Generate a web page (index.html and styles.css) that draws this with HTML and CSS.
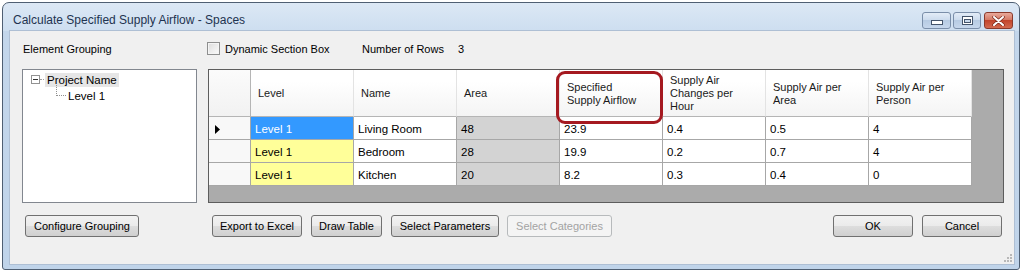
FILE: index.html
```html
<!DOCTYPE html>
<html lang="en">
<head>
  <meta charset="UTF-8" />
  <title>Calculate Specified Supply Airflow - Spaces</title>
  <link rel="stylesheet" href="styles.css">
</head>
<body>
  <div class="window">
    <!-- TITLE BAR -->
    <div class="titlebar">
      <span class="title">Calculate Specified Supply Airflow - Spaces</span>
      <div class="caption-btns">
        <div class="cap cap-min">
          <svg width="12" height="5" viewBox="0 0 12 5"><rect x="0.5" y="0.5" width="11" height="4" fill="#fff" stroke="#44546b"/></svg>
        </div>
        <div class="cap cap-max">
          <svg width="11" height="9" viewBox="0 0 11 9"><rect x="0.5" y="0.5" width="10" height="8" fill="#fff" stroke="#44546b"/><rect x="2.5" y="3.5" width="6" height="3" fill="#c9d9ec" stroke="#44546b"/></svg>
        </div>
        <div class="cap cap-close">
          <svg width="13" height="10" viewBox="0 0 13 10"><path d="M2 1 L11 9 M11 1 L2 9" stroke="#7a2a1c" stroke-width="3.4" stroke-linecap="round"/><path d="M2 1 L11 9 M11 1 L2 9" stroke="#fff" stroke-width="2" stroke-linecap="round"/></svg>
        </div>
      </div>
    </div>

    <!-- DIALOG BODY -->
    <div class="content">
      <div class="col-left">
        <div class="top-row"><span class="label">Element Grouping</span></div>
        <div class="tree">
          <div class="node root">
            <span class="expander"><svg width="9" height="9" viewBox="0 0 9 9"><rect x="0.5" y="0.5" width="8" height="8" fill="#fff" stroke="#929292"/><path d="M2 4.5 H7" stroke="#333"/></svg></span>
            <span class="stub"></span>
            <span class="node-text selected">Project Name</span>
          </div>
          <div class="node child">
            <span class="elbow"></span>
            <span class="node-text">Level 1</span>
          </div>
        </div>
        <div class="btn-row">
          <button class="btn btn-config">Configure Grouping</button>
        </div>
      </div>

      <div class="col-right">
        <div class="top-row">
          <span class="checkbox"></span>
          <span class="check-label">Dynamic Section Box</span>
          <span class="rows-label">Number of Rows</span>
          <span class="rows-value">3</span>
        </div>

        <div class="grid-wrap">
          <div class="table">
            <div class="cell hdr corner"></div>
            <div class="cell hdr">Level</div>
            <div class="cell hdr">Name</div>
            <div class="cell hdr">Area</div>
            <div class="cell hdr">Specified<br>Supply Airflow</div>
            <div class="cell hdr">Supply Air<br>Changes per<br>Hour</div>
            <div class="cell hdr">Supply Air per<br>Area</div>
            <div class="cell hdr">Supply Air per<br>Person</div>

            <div class="cell rowhdr"><svg width="5" height="9" viewBox="0 0 5 9"><path d="M0 0 L5 4.5 L0 9 Z" fill="#000"/></svg></div>
            <div class="cell current">Level 1</div>
            <div class="cell">Living Room</div>
            <div class="cell area">48</div>
            <div class="cell">23.9</div>
            <div class="cell">0.4</div>
            <div class="cell">0.5</div>
            <div class="cell">4</div>

            <div class="cell rowhdr"></div>
            <div class="cell flagged">Level 1</div>
            <div class="cell">Bedroom</div>
            <div class="cell area">28</div>
            <div class="cell">19.9</div>
            <div class="cell">0.2</div>
            <div class="cell">0.7</div>
            <div class="cell">4</div>

            <div class="cell rowhdr"></div>
            <div class="cell flagged">Level 1</div>
            <div class="cell">Kitchen</div>
            <div class="cell area">20</div>
            <div class="cell">8.2</div>
            <div class="cell">0.3</div>
            <div class="cell">0.4</div>
            <div class="cell">0</div>
          </div>
          <!-- callout round the Specified Supply Airflow column -->
          <div class="callout"></div>
        </div>

        <div class="btn-row actions">
          <button class="btn btn-export">Export to Excel</button>
          <button class="btn btn-draw">Draw Table</button>
          <button class="btn btn-params">Select Parameters</button>
          <button class="btn btn-cats" disabled>Select Categories</button>
          <span class="spacer"></span>
          <button class="btn btn-ok">OK</button>
          <button class="btn btn-cancel">Cancel</button>
        </div>
      </div>

      <svg class="grip" width="9" height="9" viewBox="0 0 9 9">
        <rect x="7" y="1" width="2" height="2" fill="#b8b8b8"/>
        <rect x="4" y="4" width="2" height="2" fill="#b8b8b8"/>
        <rect x="7" y="4" width="2" height="2" fill="#b8b8b8"/>
        <rect x="1" y="7" width="2" height="2" fill="#b8b8b8"/>
        <rect x="4" y="7" width="2" height="2" fill="#b8b8b8"/>
        <rect x="7" y="7" width="2" height="2" fill="#b8b8b8"/>
      </svg>
    </div>
  </div>
</body>
</html>
```

FILE: styles.css
```css
body {
  margin: 0;
  background-color: #fff;
  font-family: 'Liberation Sans', Arial, sans-serif;
  font-size: 11px;
  color: #000;
}

/* Window frame */
.window {
  margin: 2px 0 0 2px;
  width: 1018px;
  height: 268px;
  box-sizing: border-box;
  border: 1px solid #4f5f73;
  border-radius: 7px 7px 3px 3px;
  padding: 0 5px 5px 7px;
  display: flex;
  flex-direction: column;
  background: linear-gradient(#dce8f5, #cddef0 28px, #c3d6eb 28px, #c0d4ea);
}
.titlebar {
  height: 28px;
  display: flex;
  align-items: flex-start;
  padding: 0 1px 0 3px;
}
.title {
  margin-top: 10px;
  font-size: 12px;
  color: #1e3350;
}
.caption-btns {
  margin-left: auto;
  margin-top: 9px;
  display: flex;
}
.cap {
  height: 17px;
  box-sizing: border-box;
  border: 1px solid #7a8ea9;
  border-radius: 3px;
  display: flex;
  align-items: center;
  justify-content: center;
  background: linear-gradient(#e3ecf7, #cddcee 45%, #b7cbe3 50%, #c6d7ec);
}
.cap-min {
  width: 29px;
  margin-right: 2px;
  padding-top: 4px;
}
.cap-max {
  width: 28px;
  margin-right: 3px;
}
.cap-close {
  width: 29px;
  border-color: #8a3a2c;
  background: linear-gradient(#e9a99a, #d57a66 45%, #c2452c 50%, #d36a50);
}

/* Dialog body */
.content {
  position: relative;
  height: 233px;
  box-sizing: border-box;
  background-color: #f0f0f0;
  box-shadow: 0 0 0 1px #aebfd4;
  padding: 11px 10px 0 12px;
  display: flex;
  gap: 11px;
}
.col-left {
  width: 175px;
  display: flex;
  flex-direction: column;
}
.col-right {
  width: 796px;
  display: flex;
  flex-direction: column;
}
.top-row {
  height: 13px;
  display: flex;
  align-items: center;
}
.label {
  padding-left: 1px;
}
.checkbox {
  width: 13px;
  height: 13px;
  box-sizing: border-box;
  margin-left: -1px;
  border: 1px solid #8e8f8f;
  background: linear-gradient(135deg, #dcdcdc, #fbfbfb);
  box-shadow: inset 0 0 0 1px #f4f4f4;
}
.check-label {
  margin-left: 5px;
  width: 137px;
}
.rows-label {
  width: 96px;
}

/* Tree */
.tree {
  margin-top: 14px;
  height: 134px;
  box-sizing: border-box;
  border: 1px solid #82878f;
  background-color: #fff;
  padding-top: 1px;
}
.node {
  height: 17px;
  display: flex;
  align-items: center;
}
.root {
  padding-left: 8px;
}
.expander {
  display: flex;
}
.stub {
  width: 4px;
  border-top: 1px dotted #a0a0a0;
  margin: 0 1px 0 0;
}
.node-text {
  padding: 1px 2px;
  font-size: 11.5px;
}
.node-text.selected {
  background-color: #e6e6e6;
}
.child {
  padding-left: 33px;
  align-items: flex-start;
}
.child .elbow {
  width: 9px;
  height: 10px;
  margin-top: -3px;
  border-left: 1px dotted #909090;
  border-bottom: 1px dotted #909090;
}
.child .node-text {
  margin-top: 1px;
}

/* Data grid */
.grid-wrap {
  position: relative;
  margin-top: 14px;
  height: 134px;
  box-sizing: border-box;
  border: 1px solid #5d5d5d;
  background-color: #ababab;
}
.table {
  display: grid;
  grid-template-columns: 42px repeat(7, 103px);
  grid-template-rows: 47px repeat(3, 23px);
  width: 763px;
}
.cell {
  box-sizing: border-box;
  border-right: 1px solid #a7a7a7;
  border-bottom: 1px solid #a7a7a7;
  background-color: #fff;
  display: flex;
  align-items: center;
  padding: 2px 0 0 4px;
  font-size: 11.5px;
  white-space: nowrap;
  overflow: hidden;
}
.cell.hdr {
  padding: 1px 0 0 7px;
  font-size: 11px;
  line-height: 13px;
  color: #1a1a1a;
  background: linear-gradient(#fff, #fff 25%, #f4f4f4);
  border-right-color: #e3e3e3;
  border-bottom-color: #b5b5b5;
}
.cell.corner {
  border-right-color: #b5b5b5;
  background: linear-gradient(#fbfbfb, #f2f2f2);
}
.cell.rowhdr {
  background-color: #f8f8f8;
  padding-left: 6px;
}
.cell.current {
  background-color: #3399ff;
  color: #fff;
}
.cell.flagged {
  background-color: #ffff99;
}
.cell.area {
  background-color: #d3d3d3;
}
.callout {
  position: absolute;
  left: 347px;
  top: 1px;
  width: 107px;
  height: 53px;
  box-sizing: border-box;
  border: 3px solid #a51920;
  border-radius: 9px;
}

/* Buttons */
.btn-row {
  margin-top: 12px;
  height: 22px;
  display: flex;
  gap: 9px;
}
.actions {
  padding: 0 2px 0 4px;
}
.spacer {
  flex: 1;
}
.btn {
  height: 22px;
  padding: 0;
  box-sizing: border-box;
  border: 1px solid #707070;
  border-radius: 3px;
  background: linear-gradient(#f2f2f2, #ebebeb 48%, #dddddd 52%, #cfcfcf);
  font-family: 'Liberation Sans', Arial, sans-serif;
  font-size: 11px;
  color: #000;
}
.btn:disabled {
  border-color: #b7babc;
  background: #f4f4f4;
  color: #a3a3a3;
}
.btn-config { width: 114px; margin-left: 3px; }
.btn-export { width: 90px; }
.btn-draw { width: 71px; }
.btn-params { width: 108px; }
.btn-cats { width: 105px; margin-left: -1px; }
.btn-ok { width: 80px; }
.btn-cancel { width: 80px; }

.grip {
  position: absolute;
  right: 2px;
  bottom: 2px;
}
```
